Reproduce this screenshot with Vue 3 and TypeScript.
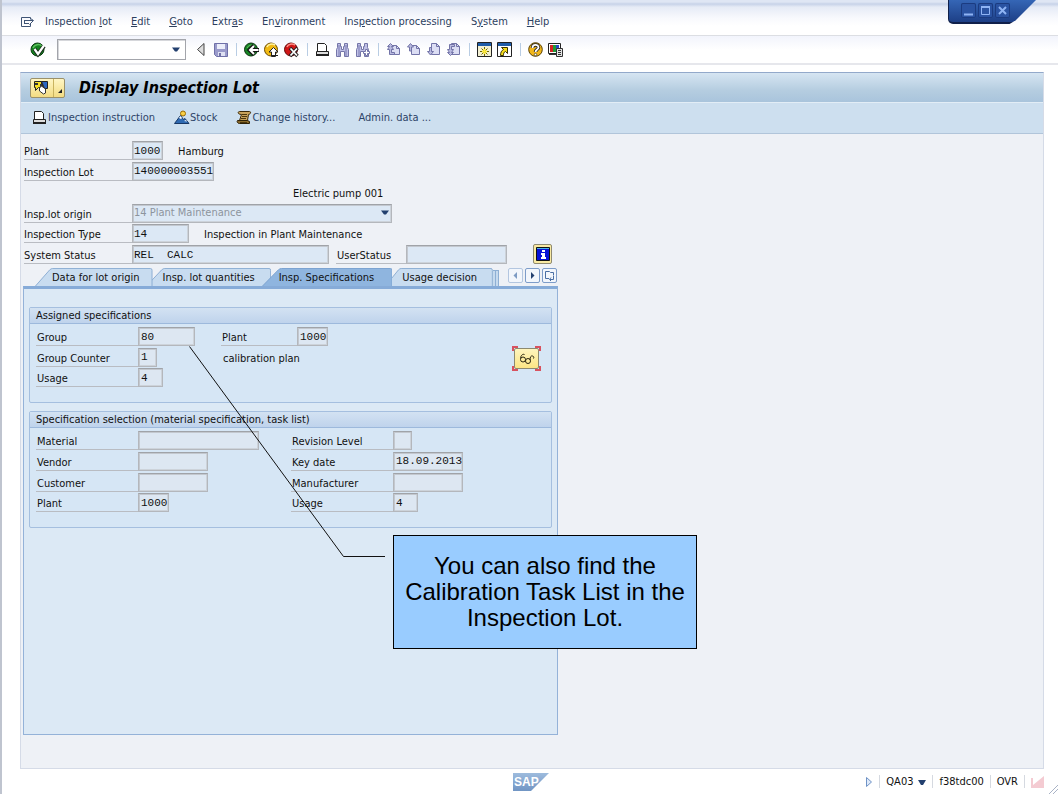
<script setup lang="ts">
import { ref } from 'vue'

interface MenuEntry { before: string; key: string; after: string }
interface Field { id: string; label: string; value: string; size: string }

const menus: MenuEntry[] = [
  { before: 'Inspection ', key: 'l', after: 'ot' },
  { before: '', key: 'E', after: 'dit' },
  { before: '', key: 'G', after: 'oto' },
  { before: 'Extr', key: 'a', after: 's' },
  { before: 'En', key: 'v', after: 'ironment' },
  { before: 'Ins', key: 'p', after: 'ection processing' },
  { before: 'S', key: 'y', after: 'stem' },
  { before: '', key: 'H', after: 'elp' },
]

const tabs: string[] = ['Data for lot origin', 'Insp. lot quantities', 'Insp. Specifications', 'Usage decision']
const activeTab = ref<number>(2)

const assigned: Field[] = [
  { id: 'group', label: 'Group', value: '80', size: 'w8' },
  { id: 'group-counter', label: 'Group Counter', value: '1', size: 'w2' },
  { id: 'usage', label: 'Usage', value: '4', size: 'w3' },
]

const selectionLeft: Field[] = [
  { id: 'material', label: 'Material', value: '', size: 'w18' },
  { id: 'vendor', label: 'Vendor', value: '', size: 'w10' },
  { id: 'customer', label: 'Customer', value: '', size: 'w10' },
  { id: 'sel-plant', label: 'Plant', value: '1000', size: 'w4' },
]

const selectionRight: Field[] = [
  { id: 'revision', label: 'Revision Level', value: '', size: 'w2' },
  { id: 'key-date', label: 'Key date', value: '18.09.2013', size: 'w10' },
  { id: 'manufacturer', label: 'Manufacturer', value: '', size: 'w10' },
  { id: 'sel-usage', label: 'Usage', value: '4', size: 'w3' },
]
</script>

<template>
  <div class="window">
    <div class="window-controls">
      <button type="button" aria-label="Minimize"><svg viewBox="0 0 15 15"><path d="M3 11.5h9" stroke="#8fb4f4" stroke-width="2" /></svg></button>
      <button type="button" aria-label="Maximize"><svg viewBox="0 0 15 15"><path d="M3.500 4.500h8v7h-8z" fill="none" stroke="#8fb4f4" /><path d="M3 4h9" stroke="#8fb4f4" stroke-width="2" /></svg></button>
      <button type="button" aria-label="Close"><svg viewBox="0 0 15 15"><path d="M4 4l7 7M11 4l-7 7" stroke="#8fb4f4" stroke-width="2" /></svg></button>
    </div>

    <nav class="menubar">
      <svg class="menu-icon" viewBox="0 0 15 12" fill="none" stroke="#3f5475"><path d="M10.500 8v2.500h-9v-9h9v2" /><path d="M4 4.500h9M4 7.500h5M4.500 4.500v3M10.500 2.500l3 2-4 4" /></svg>
      <button v-for="m in menus" :key="m.before + m.key + m.after" type="button">{{ m.before }}<u>{{ m.key }}</u>{{ m.after }}</button>
    </nav>

    <div class="toolbar">
      <button class="ib enter" type="button" aria-label="Enter">
        <svg viewBox="0 0 16 16"><circle cx="7.500" cy="7.500" r="6.500" fill="#14811f" stroke="#0b3a12" /><path d="M3 6a5.500 5 0 0 1 9-2" stroke="#5cc05c" stroke-width="1.500" fill="none" /><path d="M4.500 7l3.500 5 6-8" stroke="#1a2a1a" stroke-width="4" fill="none" /><path d="M4.500 7l3.500 5 6-8.500" stroke="#fff" stroke-width="2.200" fill="none" /></svg>
      </button>
      <div class="combo">
        <input id="command" type="text" aria-label="Command" />
        <svg viewBox="0 0 8 5"><path d="M0 0.500h8L5 4.500H3z" fill="#23406f" /></svg>
      </div>
      <button class="ib narrow" type="button" aria-label="Hide command field">
        <svg viewBox="0 0 16 16"><path d="M10 1.500v12L3.500 7.500z" fill="#ddd" stroke="#444" /></svg>
      </button>
      <button class="ib" type="button" aria-label="Save">
        <svg viewBox="0 0 16 16"><path d="M1.500 1.500h13v13h-11l-2-2z" fill="#9a9bcb" stroke="#6f70a8" /><path d="M4 2h8v5H4z" fill="#eceefa" /><path d="M5 10h7v4H5z" fill="#dfe1f3" /><path d="M6 11h2v3H6z" fill="#7172a7" /></svg>
      </button>
      <i class="sep"></i>
      <button class="ib" type="button" aria-label="Back">
        <svg viewBox="0 0 16 16"><circle cx="7" cy="7.500" r="6.500" fill="#168522" stroke="#08320e" /><path d="M3 6a5 4 0 0 1 8-2" stroke="#67bd66" fill="none" /><path d="M15 8H6M10 3.500L5.500 8l4.500 4.500" stroke="#151515" stroke-width="4" fill="none" /><path d="M14.500 8H6M10 4L6 8l4 4" stroke="#fff" stroke-width="2" fill="none" /></svg>
      </button>
      <button class="ib" type="button" aria-label="Exit">
        <svg viewBox="0 0 16 16"><circle cx="7" cy="7.500" r="6.500" fill="#f1ba14" stroke="#6b4b00" /><path d="M3 5a5 4 0 0 1 8-2" stroke="#fff3a0" stroke-width="1.500" fill="none" /><path d="M9.500 5.500L5 10h2.500v4.500h4V10H14z" fill="#fff" stroke="#222" /><path d="M8 13.500h6" stroke="#222" /></svg>
      </button>
      <button class="ib" type="button" aria-label="Cancel">
        <svg viewBox="0 0 16 16"><circle cx="7" cy="7.500" r="6.500" fill="#d01616" stroke="#620606" /><path d="M3 5a5 4 0 0 1 8-2" stroke="#ff8f86" stroke-width="1.500" fill="none" /><path d="M6 6l7.500 8M13.500 6L6 14" stroke="#222" stroke-width="3.500" /><path d="M6.500 6.500l6.500 7M13 6.500l-6.500 7" stroke="#fff" stroke-width="1.800" /></svg>
      </button>
      <i class="sep"></i>
      <button class="ib" type="button" aria-label="Print">
        <svg viewBox="0 0 16 16"><path d="M2.500 9V1.500h7l2 2V9" fill="#fff" stroke="#222" /><path d="M1.500 9.500h12v4h-12z" fill="#ddd" stroke="#222" /><path d="M1 13h13" stroke="#222" stroke-width="2" /></svg>
      </button>
      <button class="ib" type="button" aria-label="Find">
        <svg viewBox="0 0 16 16"><path d="M2.500 1.500h3v3h1v3h2v-3h1v-3h3v4l1 2v7h-4v-5h-4v5h-4v-7l1-2z" fill="#c0c1e6" stroke="#7576a9" /><path d="M4 3v11M11 3v11" stroke="#9091c3" stroke-width="1.500" /></svg>
      </button>
      <button class="ib" type="button" aria-label="Find next">
        <svg viewBox="0 0 16 16"><path d="M2.500 1.500h3v3h1v3h2v-3h1v-3h3v4l1 2v7h-4v-5h-4v5h-4v-7l1-2z" fill="#c0c1e6" stroke="#7576a9" /><path d="M4 3v11" stroke="#9091c3" stroke-width="1.500" /><path d="M10.500 7.500h2v2h2v2h-2v2h-2v-2h-2v-2h2z" fill="#fff" stroke="#7576a9" /></svg>
      </button>
      <i class="sep"></i>
      <button class="ib" type="button" aria-label="First page">
        <svg viewBox="0 0 16 16" stroke="#7374a8"><path d="M5.500 3.500h5l3 3v6h-8z" fill="#dcdef4" /><path d="M10.500 3.500v3h3" fill="none" /><path d="M1.500 4.500l3-3 3 3-2 0 2 3h-2v3h3v2h-5v-5h-2l2-3z" fill="#b9bae0" /></svg>
      </button>
      <button class="ib" type="button" aria-label="Previous page">
        <svg viewBox="0 0 16 16" stroke="#7374a8"><path d="M5.500 3.500h5l3 3v6h-8z" fill="#dcdef4" /><path d="M10.500 3.500v3h3" fill="none" /><path d="M1.500 5l3-3.500 3 3.500h-2v4h-2V5z" fill="#b9bae0" /></svg>
      </button>
      <button class="ib" type="button" aria-label="Next page">
        <svg viewBox="0 0 16 16" stroke="#7374a8"><path d="M5.500 1.500h5l3 3v8h-8z" fill="#dcdef4" /><path d="M10.500 1.500v3h3" fill="none" /><path d="M1.500 9.500l3 3.500 3-3.500h-2v-4h-2v4z" fill="#b9bae0" /></svg>
      </button>
      <button class="ib" type="button" aria-label="Last page">
        <svg viewBox="0 0 16 16" stroke="#7374a8"><path d="M5.500 1.500h5l3 3v8h-8z" fill="#dcdef4" /><path d="M10.500 1.500v3h3" fill="none" /><path d="M1.500 10.500l3 3 3-3h-2l2-3h-2v-3h3v-2h-5v5h-2l2 3z" fill="#b9bae0" /></svg>
      </button>
      <i class="sep"></i>
      <button class="ib" type="button" aria-label="New session">
        <svg viewBox="0 0 16 16"><path d="M0.500 0.500h14v14h-14z" fill="#f3f0d2" stroke="#222" /><path d="M1 1h13v3H1z" fill="#1f5ba8" /><path d="M7.500 5v9M3 9.500h9M4.500 6.500l6 6M10.500 6.500l-6 6" stroke="#6d6400" /><path d="M7.500 7v5M5 9.500h5" stroke="#ffec3d" stroke-width="2" /></svg>
      </button>
      <button class="ib" type="button" aria-label="Create shortcut">
        <svg viewBox="0 0 16 16"><path d="M0.500 0.500h14v14h-14z" fill="#fff" stroke="#222" /><path d="M1 1h13v3H1z" fill="#1f5ba8" /><path d="M4.500 5.500h6v6l-2-2c-2 1-2 2-2 4h-3c0-3 1-5 3-6z" fill="#f4dc1b" stroke="#3a3300" /></svg>
      </button>
      <i class="sep"></i>
      <button class="ib" type="button" aria-label="Help">
        <svg viewBox="0 0 16 16"><circle cx="7.500" cy="7.500" r="6.800" fill="#f2b71b" stroke="#5b4100" /><path d="M4.500 6c0-4 6-4 6-.500 0 2-3 2-3 4.500" stroke="#222" stroke-width="3.500" fill="none" /><path d="M4.500 6c0-4 6-4 6-.500 0 2-3 2-3 4.500" stroke="#fff" stroke-width="1.800" fill="none" /><circle cx="7.500" cy="12.500" r="1.200" fill="#fff" stroke="#222" stroke-width=".6" /></svg>
      </button>
      <button class="ib" type="button" aria-label="Customize local layout">
        <svg viewBox="0 0 16 16"><path d="M0.500 1.500h12v10h-12z" fill="#fff" stroke="#222" /><path d="M2 3h3v7H2z" fill="#d52222" /><path d="M5 3h3v7H5z" fill="#1e9c36" /><path d="M8 3h3v7H8z" fill="#2746c4" /><path d="M8.500 6.500h6v8h-6z" fill="#e4e4e4" stroke="#333" /><path d="M10 8.500h3M10 10.500h3M10 12.500h3M1 12.500h7" stroke="#333" /></svg>
      </button>
    </div>

    <main class="workspace">
      <header class="titlebar">
        <button class="object-button" type="button" aria-label="Services for object">
          <svg viewBox="0 0 33 18"><path d="M3.500 2.500h7v6h-3l-3 3v-3h-1z" fill="#f6df24" stroke="#222" /><path d="M4 4h3v2H4zM9 5h3v4H9z" fill="#333" /><path d="M10.500 2.500h6v7h-3z" fill="#2b66c0" stroke="#222" /><path d="M8.500 9l2-2 4 3v4l-2 1-4-3z" fill="#fff" stroke="#333" /><path d="M22.500 0v18" stroke="#c9b35f" /><path d="M31 10v4h-4z" fill="#222" /></svg>
        </button>
        <h1>Display Inspection Lot</h1>
      </header>
      <div class="actions">
        <button type="button"><svg viewBox="0 0 16 16"><path d="M2.500 9V1.500h7l2 2V9" fill="#fff" stroke="#222" /><path d="M1.500 9.500h12v4h-12z" fill="#ddd" stroke="#222" /><path d="M1 13h13" stroke="#222" stroke-width="2" /></svg>Inspection instruction</button>
        <button type="button"><svg viewBox="0 0 16 16"><path d="M0.500 13.500l6-8 3 4 1.500-1 4 5z" fill="#2f6ab2" stroke="#173765" /><path d="M5 8l1.500-2L8 8l-1 1zM10 11l2-1 1 1.500z" fill="#fff" /><circle cx="9" cy="3.500" r="2.500" fill="#f9cf45" stroke="#9b6b00" /></svg>Stock</button>
        <button type="button"><svg viewBox="0 0 16 16"><path d="M3.500 1.500h10c2 0 1 3-1 3l-1 6h-8l2-6c-4 0-4-3-2-3z" fill="#c8a35b" stroke="#3c2a08" /><path d="M1.500 10.500h10l2 1v2h-10c-2 0-3-2-2-3z" fill="#8a6b2c" stroke="#2e2107" /><path d="M6 4.500h5M6 6.500h5M5 8.500h5M4 12.500h7" stroke="#4c370d" /></svg>Change history...</button>
        <button class="text-only" type="button">Admin. data ...</button>
      </div>

      <section class="content">
        <div class="header-form">
          <div class="row">
            <label for="plant">Plant</label><input id="plant" class="w4" value="1000" readonly />
            <span class="note">Hamburg</span>
          </div>
          <div class="row">
            <label for="lot">Inspection Lot</label><input id="lot" class="w12" value="140000003551" readonly />
          </div>
          <div class="row"><span class="material">Electric pump 001</span></div>
          <div class="row">
            <label for="origin">Insp.lot origin</label>
            <div class="select-box">
              <select id="origin" disabled><option>14 Plant Maintenance</option></select>
              <svg viewBox="0 0 8 5"><path d="M0 0.500h8L5 4.500H3z" fill="#23406f" /></svg>
            </div>
          </div>
          <div class="row">
            <label for="type">Inspection Type</label><input id="type" class="w8" value="14" readonly />
            <span class="note">Inspection in Plant Maintenance</span>
          </div>
          <div class="row">
            <label for="sys-status">System Status</label><input id="sys-status" class="w30" value="REL  CALC" readonly />
            <label class="second" for="user-status">UserStatus</label><input id="user-status" class="w15" readonly />
            <button class="info" type="button" aria-label="Status information">
              <svg viewBox="0 0 14 14"><path d="M0.500 0.500h13v13H0.500z" fill="#0712d8" stroke="#111" /><path d="M1 1.500h12" stroke="#4ab3e8" /><path d="M6 3h3v2H6zM5 6h4v4h1v2H5v-2h1V8H5z" fill="#fff" /></svg>
            </button>
          </div>
        </div>

        <div class="tabstrip">
          <div class="tabs" role="tablist">
            <button v-for="(t, i) in tabs" :key="t" type="button" role="tab" :aria-selected="i === activeTab" :class="['tab', { active: i === activeTab }]" @click="activeTab = i">
              <svg viewBox="0 0 120 19" preserveAspectRatio="none"><path d="M0.500 19L15 2Q16.500 0.500 18 0.500H118q1.500 0 1.500 2V19" vector-effect="non-scaling-stroke" /></svg>
              <span>{{ t }}</span>
            </button>
            <i class="stack"></i><i class="stack"></i>
          </div>
          <div class="tab-nav">
            <button class="dim" type="button" aria-label="Previous tab"><svg viewBox="0 0 13 13"><path d="M8 3v7L4.500 6.500z" fill="#7d9bc4" /></svg></button>
            <button type="button" aria-label="Next tab"><svg viewBox="0 0 13 13"><path d="M5 3v7l3.500-3.500z" fill="#23406f" /></svg></button>
            <button type="button" aria-label="Tab list"><svg viewBox="0 0 13 13" fill="none" stroke="#4a6ea3"><path d="M6 9.500H2.500v-7h4l1 1h3v3" /><path d="M7 10.500h3.500V7M8 8.500l-1.500 2 1.500 1.500" /></svg></button>
          </div>
        </div>

        <div class="tab-panel">
          <fieldset class="group">
            <legend>Assigned specifications</legend>
            <div class="columns first">
              <div class="rows">
                <div v-for="f in assigned" :key="f.id" class="row">
                  <label :for="f.id">{{ f.label }}</label><input :id="f.id" :class="f.size" :value="f.value" readonly />
                </div>
              </div>
              <div class="rows narrow-labels">
                <div class="row"><label for="spec-plant">Plant</label><input id="spec-plant" class="w4" value="1000" readonly /></div>
                <div class="row"><span class="plan">calibration plan</span></div>
                <div class="row"></div>
              </div>
              <div class="focus-frame">
                <button type="button" aria-label="Display task list">
                  <svg viewBox="0 0 16 12" fill="none" stroke="#2a2610"><circle cx="4" cy="6.500" r="2.500" /><circle cx="9" cy="8" r="2.500" /><path d="M1.500 5.500C1.500 3 3.500 0.500 5.500 1.500M11 7c0-3 1-4.500 2.500-4s1.500 1.500 1 2.500" /></svg>
                </button>
                <svg class="brackets" viewBox="0 0 29 25" fill="none" stroke="#d8525f" stroke-width="2"><path d="M1 5V1h5M23 1h5v4M28 20v4h-5M6 24H1v-4" /></svg>
              </div>
            </div>
          </fieldset>

          <fieldset class="group">
            <legend>Specification selection (material specification, task list)</legend>
            <div class="columns">
              <div class="rows">
                <div v-for="f in selectionLeft" :key="f.id" class="row">
                  <label :for="f.id">{{ f.label }}</label><input :id="f.id" :class="f.size" :value="f.value" readonly />
                </div>
              </div>
              <div class="rows">
                <div v-for="f in selectionRight" :key="f.id" class="row">
                  <label :for="f.id">{{ f.label }}</label><input :id="f.id" :class="f.size" :value="f.value" readonly />
                </div>
              </div>
            </div>
          </fieldset>
        </div>
      </section>
    </main>

    <footer class="statusbar">
      <svg class="logo" viewBox="0 0 36 18" role="img" aria-label="SAP">
        <defs><linearGradient id="logo-fill" x1="0" y1="0" x2="0" y2="1"><stop offset="0" stop-color="#9dbbdd" /><stop offset="1" stop-color="#7095c4" /></linearGradient></defs>
        <path d="M0 0h36L18 18H0z" fill="url(#logo-fill)" />
        <text x="1" y="13" fill="#fff" font-family="Liberation Sans, Arial, sans-serif" font-size="12" font-weight="700">SAP</text>
      </svg>
      <div class="status-items">
        <svg class="play" viewBox="0 0 8 12"><path d="M1.500 1.500v9l5-4.500z" fill="#dfeafa" stroke="#6f93c6" /></svg>
        <span>QA03 <svg class="caret" viewBox="0 0 8 5"><path d="M0 0h8L5 5H3z" fill="#23406f" /></svg></span>
        <span>f38tdc00</span>
        <span>OVR</span>
        <span class="signal"><svg viewBox="0 0 13 12"><path d="M0 12V2h2v7L13 0v12z" fill="#f4cbd2" /></svg></span>
      </div>
      <svg class="grip" viewBox="0 0 9 10" stroke="#a9b3c6" fill="none"><path d="M0 10L9 1M4 10l5-5" /></svg>
    </footer>

    <svg class="pointer" viewBox="0 0 197 212" fill="none" stroke="#111"><path d="M0.500 0.500L154.500 210.500H196" /></svg>
    <aside class="callout">You can also find the Calibration Task List in the Inspection Lot.</aside>
  </div>
</template>

<style>
html, body { margin: 0; background: #fff; }
</style>

<style scoped>
.window {
  position: relative;
  box-sizing: border-box;
  min-height: 100vh;
  display: flex;
  flex-direction: column;
  border-left: 2px solid #bfc4cf;
  background: #fff;
  font: 11px/16px "DejaVu Sans Condensed", "DejaVu Sans", sans-serif;
  color: #111;
}
.window * { box-sizing: border-box; }
svg { display: block; flex: none; }
button {
  display: block;
  margin: 0;
  padding: 0;
  border: 0;
  background: none;
  font: inherit;
  color: inherit;
  white-space: nowrap;
}

.window-controls {
  position: absolute;
  top: 0;
  right: 22px;
  width: 88px;
  height: 24px;
  display: flex;
  gap: 2px;
  padding: 3px 0 0 12px;
  background: linear-gradient(#3566b6, #1d3f86);
  border-bottom: 2px solid #10204a;
  border-left: 1px solid #10204a;
  border-bottom-left-radius: 5px;
  clip-path: polygon(0 0, 100% 0, 77% 84%, 70% 100%, 0 100%);
}
.window-controls button {
  width: 15px;
  height: 15px;
  border-radius: 2px;
  background: #2a53a2;
  box-shadow: inset 0 0 0 1px #1b3b80;
}

.menubar {
  display: flex;
  align-items: center;
  gap: 19px;
  height: 36px;
  padding: 8px 18px 0;
  border-bottom: 1px solid #dcdee3;
  background: linear-gradient(#dfe6f4 0, #dfe6f4 2px, #c7d2e8 4px, #e6ebf6 7px, #f8f9fd 18px, #fff 26px);
  color: #2d3f5e;
}
.menu-icon { width: 15px; height: 12px; margin-right: -9px; }

.toolbar {
  display: flex;
  align-items: center;
  gap: 4px;
  height: 29px;
  padding: 0 28px;
  border-bottom: 2px solid #e6e7ec;
  background: linear-gradient(#f2f4fc, #fff 14px);
}
.ib, .ib svg { width: 16px; height: 16px; }
.enter { margin-right: 7px; }
.narrow { margin: 0 -1px 0 4px; }
.sep { width: 1px; height: 13px; margin: 0 3px; background: #b9cde4; }
.combo { position: relative; width: 129px; height: 21px; }
.combo input {
  width: 100%;
  height: 100%;
  padding: 0 18px 0 4px;
  border: 1px solid #a3a5ab;
  outline: 0;
  background: #fff;
  box-shadow: inset 1px 1px 0 #d6d7db;
  font: 11px "Liberation Mono", monospace;
}
.combo svg, .select-box svg { position: absolute; top: 8px; right: 6px; width: 8px; height: 5px; }
.select-box svg { right: 3px; top: 6px; }

.workspace {
  flex: 1;
  display: flex;
  flex-direction: column;
  margin: 7px 14px 0 18px;
  border: 1px solid #d5dbe7;
  border-top-color: #93a9ca;
  background: #eef1f6;
}
.titlebar {
  display: flex;
  align-items: center;
  gap: 14px;
  height: 29px;
  padding: 0 9px;
  background: linear-gradient(#d6e5f2, #b5cde0 60%, #a9c4dc);
}
.object-button {
  width: 35px;
  height: 20px;
  border: 1px solid #9b916a;
  border-radius: 2px;
  background: linear-gradient(#fff6c4, #f3dc83);
}
.object-button svg { width: 33px; height: 18px; }
h1 { margin: 0; font-size: 16px; line-height: 20px; font-style: italic; font-weight: 700; color: #000; }
.actions {
  display: flex;
  align-items: center;
  gap: 19px;
  height: 32px;
  padding: 0 11px;
  border-top: 1px solid #e2edf6;
  border-bottom: 1px solid #b1c5da;
  background: #cddfef;
  color: #2d4468;
}
.actions button { display: flex; align-items: center; }
.actions svg { width: 16px; height: 16px; }
.actions .text-only { padding-left: 4px; }

.content {
  flex: 1;
  display: flex;
  flex-direction: column;
  width: 100%;
  max-width: 537px;
  padding: 7px 0 33px 2px;
}
.header-form { display: grid; grid-template-rows: repeat(6, 1fr); min-height: 125px; padding-left: 1px; }
.row { display: flex; align-items: flex-start; }
label { width: 108px; height: 19px; padding-top: 3px; line-height: 15px; border-bottom: 1px solid #b9bcc2; white-space: nowrap; }
.second { width: 70px; margin-left: 7px; padding-left: 1px; }
.row input, .select-box select {
  height: 19px;
  padding: 0 0 0 1px;
  border: 1px solid #b4b7bc;
  border-top-color: #a0a3a8;
  border-radius: 0;
  outline: 0;
  background: #dce8f5;
  box-shadow: inset 1px 1px 0 #c3c8cf, inset -1px -1px 0 #cdd3da;
  color: #111;
  font: 11px "Liberation Mono", monospace;
}
.row .w2 { width: 19px; }
.row .w3 { width: 25px; }
.row .w4 { width: 31px; }
.row .w8 { width: 57px; }
.row .w10 { width: 70px; }
.row .w12 { width: 82px; }
.row .w15 { width: 101px; }
.row .w18 { width: 121px; }
.row .w30 { width: 197px; }
.note { margin-left: 15px; padding-top: 3px; line-height: 15px; }
.material { margin-left: 269px; padding-top: 3px; line-height: 15px; }
.select-box { position: relative; width: 260px; height: 19px; }
.select-box select {
  width: 100%;
  color: #8d949d;
  opacity: 1;
  appearance: none;
  font: inherit;
}
.info {
  width: 19px;
  height: 20px;
  margin: -1px 0 0 26px;
  padding: 2px;
  border: 1px solid #8f8a70;
  border-radius: 2px;
  background: #f9eaa3;
}
.info svg { width: 14px; height: 14px; }

.tabstrip { display: flex; justify-content: space-between; height: 20px; padding: 2px 1px 0 12px; }
.tabs { display: flex; }
.tab { position: relative; height: 18px; padding: 0 13px 0 17px; margin-right: -7px; z-index: 1; }
.tab:nth-child(2) { margin-right: -9px; padding-right: 16px; z-index: 0; }
.tab:nth-child(3) { padding-right: 18px; }
.tab:nth-child(4) { margin-right: 0; padding-right: 16px; z-index: 0; }
.tab.active { z-index: 2; }
.tab svg { position: absolute; inset: 0; width: 100%; height: 100%; fill: #c8dcf0; stroke: #8eafd4; }
.tab.active svg { fill: #8fb5df; stroke: #7ba2d0; }
.tab span { position: relative; line-height: 19px; }
.stack { width: 3px; margin-top: 2px; border: 1px solid #8eafd4; border-width: 1px 1px 0 0; background: #c6daee; }
.tab-nav { display: flex; gap: 2px; }
.tab-nav button { width: 15px; height: 15px; border: 1px solid #7d9cc9; border-radius: 2px; background: #f2f6fc; }
.tab-nav .dim { border-color: #b3c6e0; }

.tab-panel {
  flex: 1;
  padding: 18px 5px 0;
  border: 1px solid #94b2d8;
  border-top: 3px solid #86abd8;
  background: #dce9f5;
}
.group {
  min-width: 0;
  margin: 0 0 8px;
  padding: 3px 0 13px 6px;
  border: 1px solid #a5bfdf;
  border-radius: 2px;
  background: #d6e6f5;
}
.group legend {
  float: left;
  width: calc(100% + 6px);
  height: 16px;
  margin: -3px 0 3px -6px;
  padding: 0 6px;
  border-bottom: 1px solid #9db9dc;
  background: linear-gradient(#d3e2f2, #bfd3ec);
  line-height: 15px;
}
.columns { clear: both; display: grid; grid-template-columns: 255px 1fr; }
.columns.first { grid-template-columns: 185px 1fr 39px; align-items: center; }
.rows { display: grid; grid-auto-rows: 1fr; min-height: 83px; }
.first .rows { min-height: 62px; }
.rows label { width: 102px; padding-left: 1px; }
.rows.narrow-labels label { width: 76px; }
.rows input { background: #dde7f2; padding-left: 2px; }
.plan { padding: 3px 0 0 2px; line-height: 15px; }
.focus-frame { position: relative; width: 29px; height: 25px; padding: 2px; }
.focus-frame button {
  width: 25px;
  height: 21px;
  padding: 4px 4px;
  border: 1px solid #8d8a70;
  border-radius: 2px;
  background: linear-gradient(#fff5bd, #fbe585);
}
.focus-frame button svg { width: 16px; height: 12px; }
.brackets { position: absolute; inset: 0; width: 29px; height: 25px; pointer-events: none; }

.statusbar {
  position: relative;
  display: grid;
  grid-template-columns: 1fr auto 1fr;
  align-items: center;
  height: 25px;
  padding: 0 14px 0 0;
}
.logo { grid-column: 2; width: 36px; height: 18px; margin-left: 15px; }
.status-items { display: flex; align-items: center; justify-content: flex-end; }
.status-items span { display: flex; align-items: center; gap: 5px; padding: 1px 0 0 6px; margin-left: 6px; border-left: 1px solid #d5d9e0; line-height: 12px; }
.play { width: 8px; height: 12px; }
.caret { width: 8px; height: 5px; }
.signal svg { width: 13px; height: 12px; }
.grip { position: absolute; right: 0; bottom: 0; width: 9px; height: 10px; }

.pointer { position: absolute; left: 187px; top: 346px; width: 197px; height: 212px; pointer-events: none; z-index: 3; }
.callout {
  position: absolute;
  left: 391px;
  top: 535px;
  width: 304px;
  padding: 17px 10px 17px;
  border: 1px solid #000;
  background: #99ccff;
  font: 24px/26px "Liberation Sans", Arial, sans-serif;
  color: #000;
  text-align: center;
  z-index: 4;
}
</style>
